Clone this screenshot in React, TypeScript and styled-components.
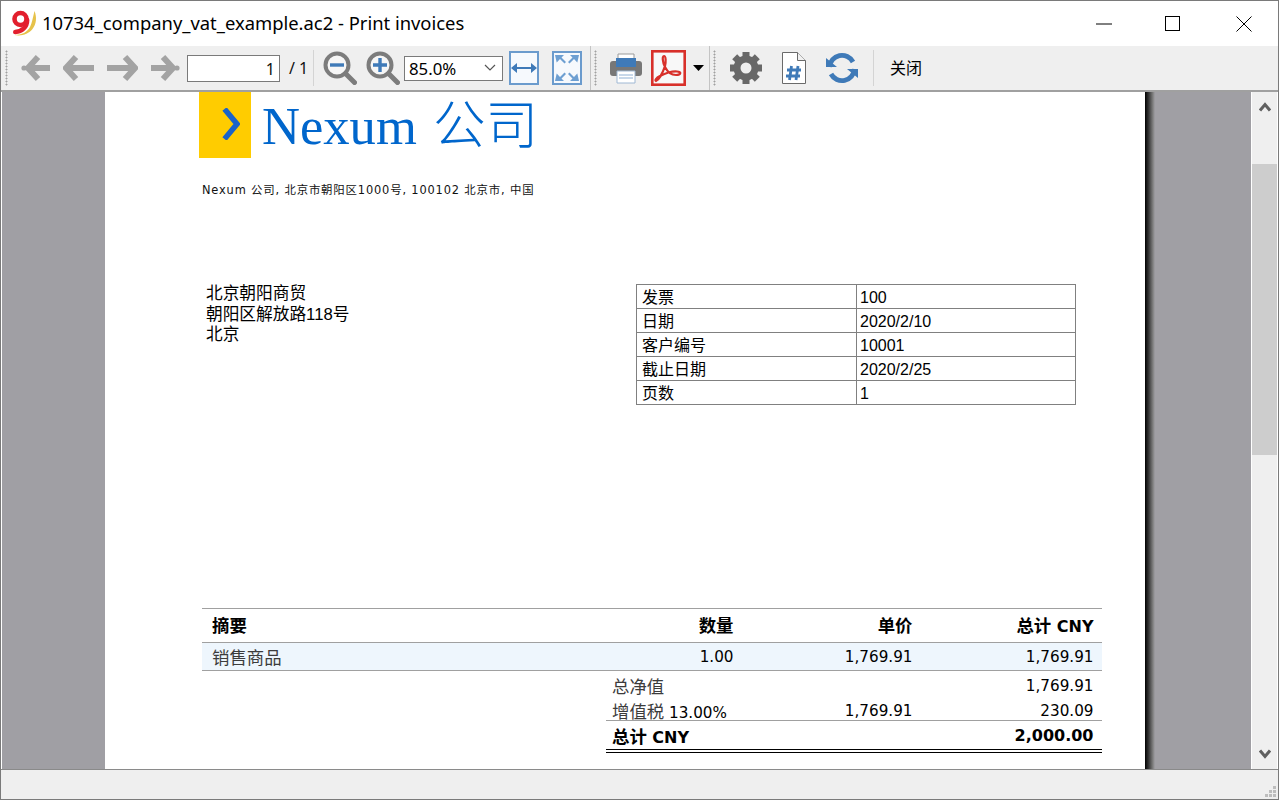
import React from "react";
import styled, { createGlobalStyle } from "styled-components";

const Global = createGlobalStyle`
  html, body { margin: 0; padding: 0; background: #fff; overflow: hidden; }
  * { box-sizing: border-box; }
`;

const CJK = `"Liberation Serif", "Noto Sans CJK SC", serif`;
const UI = `"Noto Sans", "Noto Sans CJK SC", sans-serif`;
const DOC = `"DejaVu Sans", "Noto Sans CJK SC", sans-serif`;
const TAB = `"Liberation Sans", "Noto Sans CJK SC", sans-serif`;

const Frame = styled.div`
  width: 1279px;
  height: 800px;
  border: 1px solid #7a7a7a;
  display: flex;
  flex-direction: column;
  background: #fff;
  overflow: hidden;
`;
const TitleBar = styled.div`
  height: 45px;
  display: flex;
  align-items: center;
  padding-left: 10px;
  background: #fff;
  flex: none;
`;
const TitleText = styled.div`
  margin-left: 5px;
  padding-bottom: 3px;
  font: 18.4px ${UI};
  color: #000;
  white-space: nowrap;
  flex: 1;
`;
const WinButton = styled.div<{ $w: number }>`
  width: ${(p) => p.$w}px;
  height: 45px;
  display: flex;
  align-items: center;
  justify-content: center;
  flex: none;
`;
const Toolbar = styled.div`
  height: 46px;
  flex: none;
  background: #efefef;
  border-bottom: 2px solid #a0a0a0;
  display: flex;
  align-items: center;
  position: relative;
`;
const Grip = styled.div<{ $ml: number }>`
  width: 3px;
  height: 36px;
  margin-left: ${(p) => p.$ml}px;
  flex: none;
  background-image: radial-gradient(circle, #a0a0a0 0.9px, transparent 1.1px);
  background-size: 3px 3px;
`;
const Sep = styled.div<{ $ml: number }>`
  width: 1px;
  height: 36px;
  margin-left: ${(p) => p.$ml}px;
  background: #d4d4d4;
  flex: none;
`;
const FullSep = styled.div<{ $ml: number }>`
  width: 1px;
  height: 44px;
  margin-left: ${(p) => p.$ml}px;
  background: #c4c4c4;
  flex: none;
`;
const Tool = styled.div<{ $ml: number; $w: number }>`
  width: ${(p) => p.$w}px;
  margin-left: ${(p) => p.$ml}px;
  flex: none;
  display: flex;
  align-items: center;
  justify-content: center;
`;
const PageInput = styled.div`
  width: 93px;
  height: 27px;
  margin-left: 6px;
  border: 1px solid #7a7a7a;
  background: #fff;
  font: 16px ${UI};
  text-align: right;
  line-height: 26px;
  padding-right: 4px;
  color: #111;
  flex: none;
`;
const PageTotal = styled.div`
  margin-left: 9px;
  font: 16px ${UI};
  color: #111;
  width: 24px;
  white-space: nowrap;
  flex: none;
`;
const ZoomSelect = styled.div`
  width: 99px;
  height: 25px;
  margin-left: 4px;
  border: 1px solid #7a7a7a;
  background: #fff;
  font: 16.8px ${UI};
  line-height: 23px;
  padding-left: 4px;
  flex: none;
  display: flex;
  justify-content: space-between;
  align-items: center;
  padding-right: 6px;
  color: #000;
`;
const CloseLabel = styled.div`
  margin-left: 16px;
  padding-bottom: 2px;
  font: 16px ${UI};
  color: #000;
  flex: none;
`;
const Main = styled.div`
  flex: 1;
  min-height: 0;
  display: flex;
`;
const Viewer = styled.div`
  flex: 1;
  min-width: 0;
  background: #a09fa4;
  margin-left: 1px;
  padding-left: 103px;
  overflow: hidden;
`;
const Paper = styled.div`
  width: 1040px;
  height: 100%;
  background: #fff;
  position: relative;
  padding-left: 97px;
  &::after {
    content: "";
    position: absolute;
    left: 100%;
    top: 0;
    bottom: 0;
    width: 10px;
    background: linear-gradient(90deg, #000 0%, #333 35%, #808080 80%, #a09fa4 100%);
  }
`;
const Header = styled.div`
  display: flex;
  align-items: flex-start;
  margin-left: -3px;
`;
const LogoBox = styled.div`
  width: 52px;
  height: 66px;
  background: #ffcc00;
  display: flex;
  align-items: center;
  justify-content: center;
  padding-left: 12px;
  padding-bottom: 2px;
  flex: none;
`;
const CompanyName = styled.div`
  margin-left: 11px;
  font: 300 52.6px/68px ${CJK};
  word-spacing: 3px;
  color: #0066cc;
  white-space: nowrap;
`;
const SenderLine = styled.div`
  margin-top: 22px;
  height: 16px;
  font: 11.4px/16px ${DOC};
  letter-spacing: 0.84px;
  color: #111;
  white-space: nowrap;
`;
const InfoRow = styled.div`
  margin-top: 86px;
  display: flex;
  align-items: flex-start;
  height: 120px;
`;
const Address = styled.div`
  width: 434px;
  padding-left: 4px;
  font: 16.7px/20.5px ${TAB};
  color: #000;
`;
const InfoTable = styled.div`
  width: 440px;
  border: 1px solid #808080;
  border-bottom: 0;
`;
const InfoLine = styled.div`
  height: 24px;
  display: grid;
  grid-template-columns: 220px 1fr;
  border-bottom: 1px solid #808080;
  font: 16px/25px ${TAB};
  color: #000;
  overflow: hidden;
`;
const InfoKey = styled.div`
  padding-left: 5px;
  height: 23px;
  border-right: 1px solid #808080;
`;
const InfoVal = styled.div`
  padding-left: 3px;
  height: 23px;
`;
const Lines = styled.div`
  margin-top: 204px;
  width: 900px;
`;
const LineRow = styled.div<{ $h: number; $shade?: boolean; $top?: boolean }>`
  height: ${(p) => p.$h}px;
  display: grid;
  grid-template-columns: 404px 136px 179px 181px;
  align-items: center;
  background: ${(p) => (p.$shade ? "#eef6fd" : "transparent")};
  border-top: ${(p) => (p.$top ? "1px solid #a0a0a0" : "0")};
  border-bottom: 1px solid #a0a0a0;
  padding-bottom: ${(p) => (p.$top ? 3 : 0)}px;
  font: 15px ${DOC};
  color: #000;
`;
const Cell = styled.div<{ $right?: boolean; $bold?: boolean; $pad?: number }>`
  text-align: ${(p) => (p.$right ? "right" : "left")};
  font-size: ${(p) => (p.$bold ? 16 : 15.2)}px;
  font-weight: ${(p) => (p.$bold ? 700 : 400)};
  padding-left: ${(p) => (p.$right ? 0 : (p.$pad ?? 10))}px;
  padding-right: ${(p) => (p.$right ? 8.5 : 0)}px;
  white-space: nowrap;
`;
const Han = styled.span<{ $muted?: boolean }>`
  font-size: 17.4px;
  color: ${(p) => (p.$muted ? "#3c3c3c" : "inherit")};
`;
const Totals = styled.div`
  margin-left: 404px;
  width: 496px;
`;
const TotalRow = styled.div<{ $h: number; $line?: boolean; $double?: boolean }>`
  height: ${(p) => p.$h}px;
  display: grid;
  grid-template-columns: 136px 179px 181px;
  align-items: center;
  padding-top: ${(p) => (p.$double ? 0 : 2)}px;
  border-bottom: ${(p) => (p.$double ? "4px double #000" : p.$line ? "1px solid #a0a0a0" : "0")};
  font: 15px ${DOC};
  color: #000;
`;
const Scrollbar = styled.div`
  width: 27px;
  flex: none;
  background: #efefef;
  border-left: 1px solid #fff;
  border-right: 1px solid #fff;
  display: flex;
  flex-direction: column;
  align-items: center;
`;
const ScrollArrow = styled.div`
  height: 72px;
  padding-top: 6px;
  flex: none;
`;
const ScrollThumb = styled.div`
  width: 100%;
  height: 291px;
  background: #cdcdcd;
  flex: none;
`;
const ScrollSpace = styled.div`
  flex: 1;
`;
const ScrollArrowBottom = styled.div`
  height: 24px;
  flex: none;
`;
const StatusBar = styled.div`
  height: 30px;
  flex: none;
  background: #efefef;
  border-top: 1px solid #8a8a8a;
  display: flex;
  justify-content: flex-end;
  align-items: flex-end;
  padding: 0 1px 1px 0;
`;

const Logo9 = () => (
  <svg width="26" height="27" viewBox="0 0 26 27">
    <path d="M23.500 1c2.500 6 2 13-2 18-4 5-11 7.500-18 6 7 0 13-3 15.500-8 2-4 3-10 4.500-16z" fill="#e6c24a" />
    <circle cx="9.500" cy="9" r="6" fill="#fff" stroke="#e21f2d" strokeWidth="4.600" />
    <path d="M16.200 10c0 7-5 11.500-12 12" fill="none" stroke="#e21f2d" strokeWidth="4.400" strokeLinecap="round" />
  </svg>
);

const G = "#a3a3a3";
const Arrow = ({ dir, dot }: { dir: "l" | "r"; dot?: boolean }) => (
  <svg width="34" height="28" viewBox="0 0 34 28">
    <g transform={dir === "r" ? "matrix(-1 0 0 1 34 0)" : undefined}>
      {dot && <circle cx="4" cy="14" r="2.600" fill={G} />}
      <path d={dot ? "M18 3 8 14l10 11M9 14h21" : "M13 3 3 14l10 11M5 14h26"} fill="none" stroke={G} strokeWidth="6" strokeLinejoin="miter" />
    </g>
  </svg>
);
const Magnifier = ({ plus }: { plus?: boolean }) => (
  <svg width="34" height="34" viewBox="0 0 34 34">
    <circle cx="14" cy="14" r="11.500" fill="#f6f6f6" stroke="#7c7c7c" strokeWidth="4" />
    <path d="m22.500 22.500 9 9" stroke="#7c7c7c" strokeWidth="5" strokeLinecap="round" />
    <path d={plus ? "M7 14h14M14 7v14" : "M7 14h14"} stroke="#3f7ab8" strokeWidth="3.400" />
  </svg>
);
const FitBox = styled.div`
  width: 30px;
  height: 34px;
  border: 2px solid #6b9bcd;
  background: #f6f9fd;
  display: flex;
  align-items: center;
  justify-content: center;
`;
const FitWidth = () => (
  <FitBox>
    <svg width="26" height="12" viewBox="0 0 26 12">
      <path d="M3 6h20" stroke="#3f7ab8" strokeWidth="2" />
      <path d="M0 6l6-5v10zM26 6l-6-5v10z" fill="#3f7ab8" />
    </svg>
  </FitBox>
);
const FitPage = () => (
  <FitBox>
    <svg width="26" height="30" viewBox="0 0 26 30">
      <g fill="#6d9fd2">
        <path d="M1 2h9L7.500 4.600 12 9l-1.500 1.500L6 6 2.700 9.500z" />
        <path d="M25 2h-9l2.500 2.600L14 9l1.500 1.500L20 6l3.300 3.500z" />
        <path d="M1 28h9l-2.500-2.600L12 21l-1.500-1.500L6 24l-3.300-3.500z" />
        <path d="M25 28h-9l2.500-2.600L14 21l1.500-1.500L20 24l3.300-3.500z" />
      </g>
    </svg>
  </FitBox>
);
const Printer = () => (
  <svg width="32" height="32" viewBox="0 0 32 32">
    <path d="M8 2h16v8H8z" fill="#fff" stroke="#9a9a9a" />
    <rect x="0" y="9" width="32" height="15" rx="3" fill="#777" />
    <rect x="6" y="6" width="20" height="9" fill="#3f7ab8" />
    <path d="M7 19h18v12H7z" fill="#fff" stroke="#9fb8d4" />
    <path d="M9 23h14M9 26h14" stroke="#8fb0d4" />
  </svg>
);
const Pdf = () => (
  <svg width="35" height="36" viewBox="0 0 35 36">
    <rect x="1.300" y="1.300" width="32.400" height="33.400" fill="#f8f8f8" stroke="#d8302a" strokeWidth="2.600" />
    <path d="M5 31c3-1 7-9 9-15 1-4 1-10-1-10s-1.500 6 1 11c2.500 5 7 8 11 8 5 0 6-3 1-3.500-6-.5-12 2-17 4.500-4 2-5.500 4.500-4 5z" fill="none" stroke="#d8302a" strokeWidth="2.200" />
  </svg>
);
const Caret = () => (
  <svg width="11" height="6" viewBox="0 0 11 6"><path d="M0 0h11L5.500 6z" fill="#000" /></svg>
);
const Gear = () => (
  <svg width="32" height="32" viewBox="0 0 32 32">
    <g fill="#686868">
      {[0, 45, 90, 135, 180, 225, 270, 315].map((a) => (
        <rect key={a} x="12.500" y="0" width="7" height="7" transform={`rotate(${a} 16 16)`} />
      ))}
    </g>
    <circle cx="16" cy="16" r="9" fill="none" stroke="#686868" strokeWidth="7" />
  </svg>
);
const DocHash = () => (
  <svg width="24" height="32" viewBox="0 0 24 32">
    <path d="M.5.5h15l8 8v23H.5z" fill="#fff" stroke="#6a6a6a" />
    <path d="M15.500.5v8h8" fill="#f0f0f0" stroke="#6a6a6a" />
    <path d="M9.500 14l-2 14M16 14l-2 14M5 18h14M4 24h14" stroke="#3f7ab8" strokeWidth="2.800" fill="none" />
  </svg>
);
const Refresh = () => (
  <svg width="32" height="32" viewBox="0 0 32 32">
    <g fill="none" stroke="#3f7ab8" strokeWidth="4.800">
      <path d="M3.500 15A12.500 12.500 0 0 1 27 10" />
      <path d="M28.500 17A12.500 12.500 0 0 1 5 22" />
    </g>
    <path d="M0 6l11 9H0zM32 26l-11-9h11z" fill="#3f7ab8" />
  </svg>
);
const Chevron = () => (
  <svg width="12" height="8" viewBox="0 0 12 8"><path d="M1 1l5 5 5-5" fill="none" stroke="#555" strokeWidth="1.200" /></svg>
);
const ScrollChevron = ({ up }: { up?: boolean }) => (
  <svg width="12" height="10" viewBox="0 0 12 10">
    <path d={up ? "M1 8.500l5-6 5 6" : "M1 1.500l5 6 5-6"} fill="none" stroke="#606060" strokeWidth="3" />
  </svg>
);
const SizeGrip = () => (
  <svg width="12" height="12" viewBox="0 0 12 12" fill="#bdbdbd">
    <rect x="8" y="0" width="3" height="3" />
    <rect x="4" y="4" width="3" height="3" />
    <rect x="8" y="4" width="3" height="3" />
    <rect x="0" y="8" width="3" height="3" />
    <rect x="4" y="8" width="3" height="3" />
    <rect x="8" y="8" width="3" height="3" />
  </svg>
);

const info: [string, string][] = [
  ["发票", "100"],
  ["日期", "2020/2/10"],
  ["客户编号", "10001"],
  ["截止日期", "2020/2/25"],
  ["页数", "1"],
];

export default function App() {
  return (
    <>
      <Global />
      <Frame>
        <TitleBar>
          <Logo9 />
          <TitleText>10734_company_vat_example.ac2 - Print invoices</TitleText>
          <WinButton $w={65}>
            <svg width="16" height="2" viewBox="0 0 16 2"><path d="M0 1h16" stroke="#000" /></svg>
          </WinButton>
          <WinButton $w={73}>
            <svg width="15" height="15" viewBox="0 0 15 15"><rect x=".5" y=".5" width="14" height="14" fill="none" stroke="#000" /></svg>
          </WinButton>
          <WinButton $w={69}>
            <svg width="16" height="16" viewBox="0 0 16 16"><path d="M.5.5l15 15M15.500.5l-15 15" stroke="#000" /></svg>
          </WinButton>
        </TitleBar>
        <Toolbar>
          <Grip $ml={4} />
          <Tool $ml={12} $w={34}><Arrow dir="l" dot /></Tool>
          <Tool $ml={9} $w={34}><Arrow dir="l" /></Tool>
          <Tool $ml={7} $w={34}><Arrow dir="r" /></Tool>
          <Tool $ml={9} $w={34}><Arrow dir="r" dot /></Tool>
          <PageInput>1</PageInput>
          <PageTotal>/ 1</PageTotal>
          <Sep $ml={0} />
          <Tool $ml={9} $w={34}><Magnifier /></Tool>
          <Tool $ml={9} $w={34}><Magnifier plus /></Tool>
          <ZoomSelect>85.0%<Chevron /></ZoomSelect>
          <Tool $ml={6} $w={30}><FitWidth /></Tool>
          <Tool $ml={13} $w={30}><FitPage /></Tool>
          <FullSep $ml={8} />
          <Grip $ml={3} />
          <Tool $ml={13} $w={32}><Printer /></Tool>
          <Tool $ml={9} $w={35}><Pdf /></Tool>
          <Tool $ml={7} $w={11}><Caret /></Tool>
          <FullSep $ml={5} />
          <Grip $ml={3} />
          <Tool $ml={14} $w={32}><Gear /></Tool>
          <Tool $ml={20} $w={24}><DocHash /></Tool>
          <Tool $ml={20} $w={32}><Refresh /></Tool>
          <Sep $ml={15} />
          <CloseLabel>关闭</CloseLabel>
        </Toolbar>
        <Main>
          <Viewer>
            <Paper>
              <Header>
                <LogoBox>
                  <svg width="18" height="32" viewBox="0 0 18 32">
                    <path d="M2.500 1l12.500 15L2.500 31" fill="none" stroke="#1a63c8" strokeWidth="5.500" />
                  </svg>
                </LogoBox>
                <CompanyName>Nexum 公司</CompanyName>
              </Header>
              <SenderLine>Nexum 公司, 北京市朝阳区1000号, 100102 北京市, 中国</SenderLine>
              <InfoRow>
                <Address>
                  <div>北京朝阳商贸</div>
                  <div>朝阳区解放路118号</div>
                  <div>北京</div>
                </Address>
                <InfoTable>
                  {info.map(([k, v]) => (
                    <InfoLine key={k}>
                      <InfoKey>{k}</InfoKey>
                      <InfoVal>{v}</InfoVal>
                    </InfoLine>
                  ))}
                </InfoTable>
              </InfoRow>
              <Lines>
                <LineRow $h={35} $top>
                  <Cell $bold><Han>摘要</Han></Cell>
                  <Cell $right $bold><Han>数量</Han></Cell>
                  <Cell $right $bold><Han>单价</Han></Cell>
                  <Cell $right $bold><Han>总计</Han> CNY</Cell>
                </LineRow>
                <LineRow $h={28} $shade>
                  <Cell><Han $muted>销售商品</Han></Cell>
                  <Cell $right>1.00</Cell>
                  <Cell $right>1,769.91</Cell>
                  <Cell $right>1,769.91</Cell>
                </LineRow>
                <Totals>
                  <TotalRow $h={25}>
                    <Cell $pad={6}><Han $muted>总净值</Han></Cell>
                    <Cell />
                    <Cell $right>1,769.91</Cell>
                  </TotalRow>
                  <TotalRow $h={25} $line>
                    <Cell $pad={6}><Han $muted>增值税</Han> 13.00%</Cell>
                    <Cell $right>1,769.91</Cell>
                    <Cell $right>230.09</Cell>
                  </TotalRow>
                  <TotalRow $h={32} $double>
                    <Cell $bold $pad={6}><Han>总计</Han> CNY</Cell>
                    <Cell />
                    <Cell $right $bold>2,000.00</Cell>
                  </TotalRow>
                </Totals>
              </Lines>
            </Paper>
          </Viewer>
          <Scrollbar>
            <ScrollArrow><ScrollChevron up /></ScrollArrow>
            <ScrollThumb />
            <ScrollSpace />
            <ScrollArrowBottom><ScrollChevron /></ScrollArrowBottom>
          </Scrollbar>
        </Main>
        <StatusBar><SizeGrip /></StatusBar>
      </Frame>
    </>
  );
}
